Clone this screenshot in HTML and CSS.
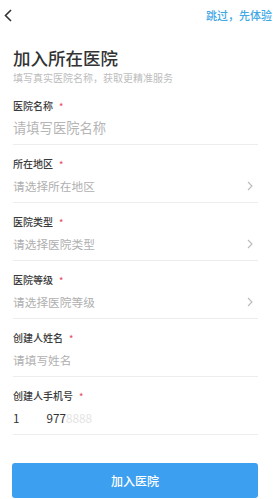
FILE: index.html
```html
<!DOCTYPE html>
<html lang="zh">
<head>
<meta charset="utf-8">
<link rel="stylesheet" href="styles.css">
</head>
<body>
<div class="page">
  <div class="topbar">
    <svg class="back" width="10" height="13" viewBox="0 0 10 13"><path d="M8 1 L2.5 6.5 L8 12" fill="none" stroke="#333" stroke-width="1.6"/></svg>
    <span class="skip">跳过，先体验</span>
  </div>
  <div class="intro">
    <h1 class="title">加入所在医院</h1>
    <p class="sub">填写真实医院名称，获取更精准服务</p>
  </div>
  <div class="form">
    <div class="field">
      <div class="label">医院名称<span class="req">*</span></div>
      <div class="row"><span class="ph big">请填写医院名称</span></div>
    </div>
    <div class="field">
      <div class="label">所在地区<span class="req">*</span></div>
      <div class="row"><span class="ph">请选择所在地区</span><svg class="chev" width="6" height="10" viewBox="0 0 6 10"><path d="M1 1 L5 5 L1 9" fill="none" stroke="#bbb" stroke-width="1.1"/></svg></div>
    </div>
    <div class="field">
      <div class="label">医院类型<span class="req">*</span></div>
      <div class="row"><span class="ph">请选择医院类型</span><svg class="chev" width="6" height="10" viewBox="0 0 6 10"><path d="M1 1 L5 5 L1 9" fill="none" stroke="#bbb" stroke-width="1.1"/></svg></div>
    </div>
    <div class="field">
      <div class="label">医院等级<span class="req">*</span></div>
      <div class="row"><span class="ph">请选择医院等级</span><svg class="chev" width="6" height="10" viewBox="0 0 6 10"><path d="M1 1 L5 5 L1 9" fill="none" stroke="#bbb" stroke-width="1.1"/></svg></div>
    </div>
    <div class="field">
      <div class="label">创建人姓名<span class="req">*</span></div>
      <div class="row"><span class="ph">请填写姓名</span></div>
    </div>
    <div class="field">
      <div class="label">创建人手机号<span class="req">*</span></div>
      <div class="row"><span class="val">1<span class="gap"></span>977<span class="faint">8888</span></span></div>
    </div>
  </div>
  <button class="submit">加入医院</button>
</div>
</body>
</html>
```
FILE: styles.css
```css
* { box-sizing: border-box; }
html, body { margin: 0; padding: 0; background: #fff; }
body { font-family: "Noto Sans CJK SC", "Noto Sans", sans-serif; color: #333; }
.page { width: 276px; height: 499px; overflow: hidden; }
.topbar { height: 30px; display: flex; align-items: center; justify-content: space-between; padding: 0 4px 0 3px; }
.back { display: block; }
.skip { font-size: 11px; color: #41a8e6; font-weight: 500; line-height: 14px; }
.intro { padding: 17px 13px 0; }
.title { margin: 0; font-size: 17.5px; font-weight: 500; line-height: 22px; color: #333; }
.sub { margin: 2px 0 0; font-size: 10px; line-height: 14px; color: #bdbdbd; }
.form { padding: 0 18px 0 13px; margin-top: 2px; }
.field { padding: 12px 0 6px; border-bottom: 1px solid #ededed; }
.label { font-size: 10px; line-height: 14px; font-weight: 500; color: #3a3a3a; }
.req { color: #e8546a; margin-left: 6px; font-size: 9px; }
.row { margin-top: 4px; height: 20px; display: flex; align-items: center; justify-content: space-between; padding-right: 5px; }
.ph { font-size: 11.7px; color: #b0b0b0; line-height: 20px; }
.ph.big { font-size: 13.3px; color: #b5b5b5; }
.chev { display: block; }
.val { font-size: 11.7px; color: #333; line-height: 20px; display: flex; }
.gap { display: inline-block; width: 27px; }
.faint { color: #e4e4e4; }
.submit { display: block; margin: 28px 18px 0 12px; width: 246px; height: 35px; border: 0; border-radius: 3px; background: #3d9ff0; color: #fff; font-family: inherit; font-size: 12px; font-weight: 500; }
```
